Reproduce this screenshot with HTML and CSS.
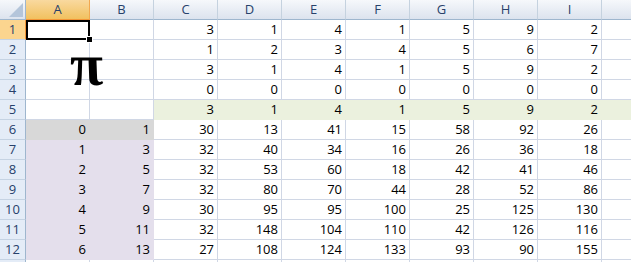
FILE: index.html
```html
<!DOCTYPE html>
<html lang="en">
<head>
    <meta charset="UTF-8">
    <meta name="viewport" content="width=device-width, initial-scale=1.0">
    <title>Sheet1</title>
    <link rel="stylesheet" href="styles.css">
</head>
<body>
    <div id="sheet" class="sheet">
        <div class="corner">
            <svg width="25" height="19" viewBox="0 0 25 19"><polygon points="9,17 23,17 23,3" fill="#b4c5da"/></svg>
        </div>
        <div class="pi">&pi;</div>
        <div class="selection"><span class="handle"></span></div>
    </div>

    <script>
        const sheet = document.getElementById('sheet');
        const cols = ['A', 'B', 'C', 'D', 'E', 'F', 'G', 'H', 'I', ''];
        const rows = [
            ['', '', 3, 1, 4, 1, 5, 9, 2],
            ['', '', 1, 2, 3, 4, 5, 6, 7],
            ['', '', 3, 1, 4, 1, 5, 9, 2],
            ['', '', 0, 0, 0, 0, 0, 0, 0],
            ['', '', 3, 1, 4, 1, 5, 9, 2],
            [0, 1, 30, 13, 41, 15, 58, 92, 26],
            [1, 3, 32, 40, 34, 16, 26, 36, 18],
            [2, 5, 32, 53, 60, 18, 42, 41, 46],
            [3, 7, 32, 80, 70, 44, 28, 52, 86],
            [4, 9, 30, 95, 95, 100, 25, 125, 130],
            [5, 11, 32, 148, 104, 110, 42, 126, 116],
            [6, 13, 27, 108, 124, 133, 93, 90, 155],
            ['', '', '', '', '', '', '', '', '']
        ];

        function add(cls, text) {
            const el = document.createElement('div');
            el.className = cls;
            el.textContent = text;
            sheet.insertBefore(el, sheet.querySelector('.pi'));
            return el;
        }

        cols.forEach((c, i) => add(i === 0 ? 'col-head active' : 'col-head', c));

        rows.forEach((row, r) => {
            // last row is only a sliver at the bottom edge, its number is out of view
            add(r === 0 ? 'row-head active' : 'row-head', r < 12 ? r + 1 : '');
            for (let c = 0; c < cols.length; c++) {
                let cls = 'cell';
                if (r === 4 && c >= 2) cls += ' green';
                if (r === 5 && c < 2) cls += ' gray';
                if (r > 5 && r < 12 && c < 2) cls += ' lavender';
                add(cls, row[c] === undefined ? '' : row[c]);
            }
        });
    </script>
</body>
</html>
```

FILE: styles.css
```css
/* Page */
* {
    margin: 0;
    padding: 0;
    box-sizing: border-box;
}
body {
    width: 631px;
    height: 262px;
    overflow: hidden;
    background: #fff;
    font-family: 'Open Sans', 'Liberation Sans', sans-serif;
    font-size: 13px;
    color: #000;
}

/* Grid */
.sheet {
    position: relative;
    display: grid;
    grid-template-columns: 26px repeat(10, 64px);
    grid-auto-rows: 20px;
    width: 667px;
}
.corner {
    background: linear-gradient(#f6f8fb, #dce3ee);
    border-right: 1px solid #9eb6ce;
    border-bottom: 1px solid #9eb6ce;
}
.corner svg {
    display: block;
}

/* Headers */
.col-head {
    background: linear-gradient(#f6f8fb, #dce3ee);
    border-right: 1px solid #c5d2df;
    border-bottom: 1px solid #9eb6ce;
    text-align: center;
    line-height: 19px;
    color: #27416b;
}
.col-head.active {
    background: linear-gradient(#f9d99f, #f1c15f);
    border-right-color: #f2a84f;
    border-bottom-color: #f29536;
}
.row-head {
    background: #e4ecf7;
    border-right: 1px solid #9eb6ce;
    border-bottom: 1px solid #c5d3e3;
    text-align: center;
    line-height: 19px;
    color: #27416b;
}
.row-head.active {
    background: #fbd58f;
    border-right-color: #f29536;
}

/* Cells */
.cell {
    border-right: 1px solid #d0d7e5;
    border-bottom: 1px solid #d0d7e5;
    padding: 0 3px;
    text-align: right;
    line-height: 19px;
    white-space: nowrap;
}
.cell.green {
    background: #ebf1de;
    border-color: #ebf1de;
}
.cell.gray {
    background: #d8d8d8;
    border-color: #d8d8d8;
}
.cell.lavender {
    background: #e4dfec;
    border-color: #e4dfec;
}

/* Overlays */
.selection {
    position: absolute;
    left: 26px;
    top: 20px;
    width: 64px;
    height: 20px;
    border: 2px solid #000;
}
.handle {
    position: absolute;
    right: -5px;
    bottom: -5px;
    width: 7px;
    height: 7px;
    background: #000;
    border: 1px solid #fff;
}
/* italic glyph has the curly legs, skew it back upright */
.pi {
    position: absolute;
    left: 73px;
    top: 35px;
    font-family: 'Liberation Serif', serif;
    font-weight: bold;
    font-style: italic;
    font-size: 60px;
    line-height: 60px;
    transform: skewX(12deg);
    transform-origin: 0 45px;
}
```
